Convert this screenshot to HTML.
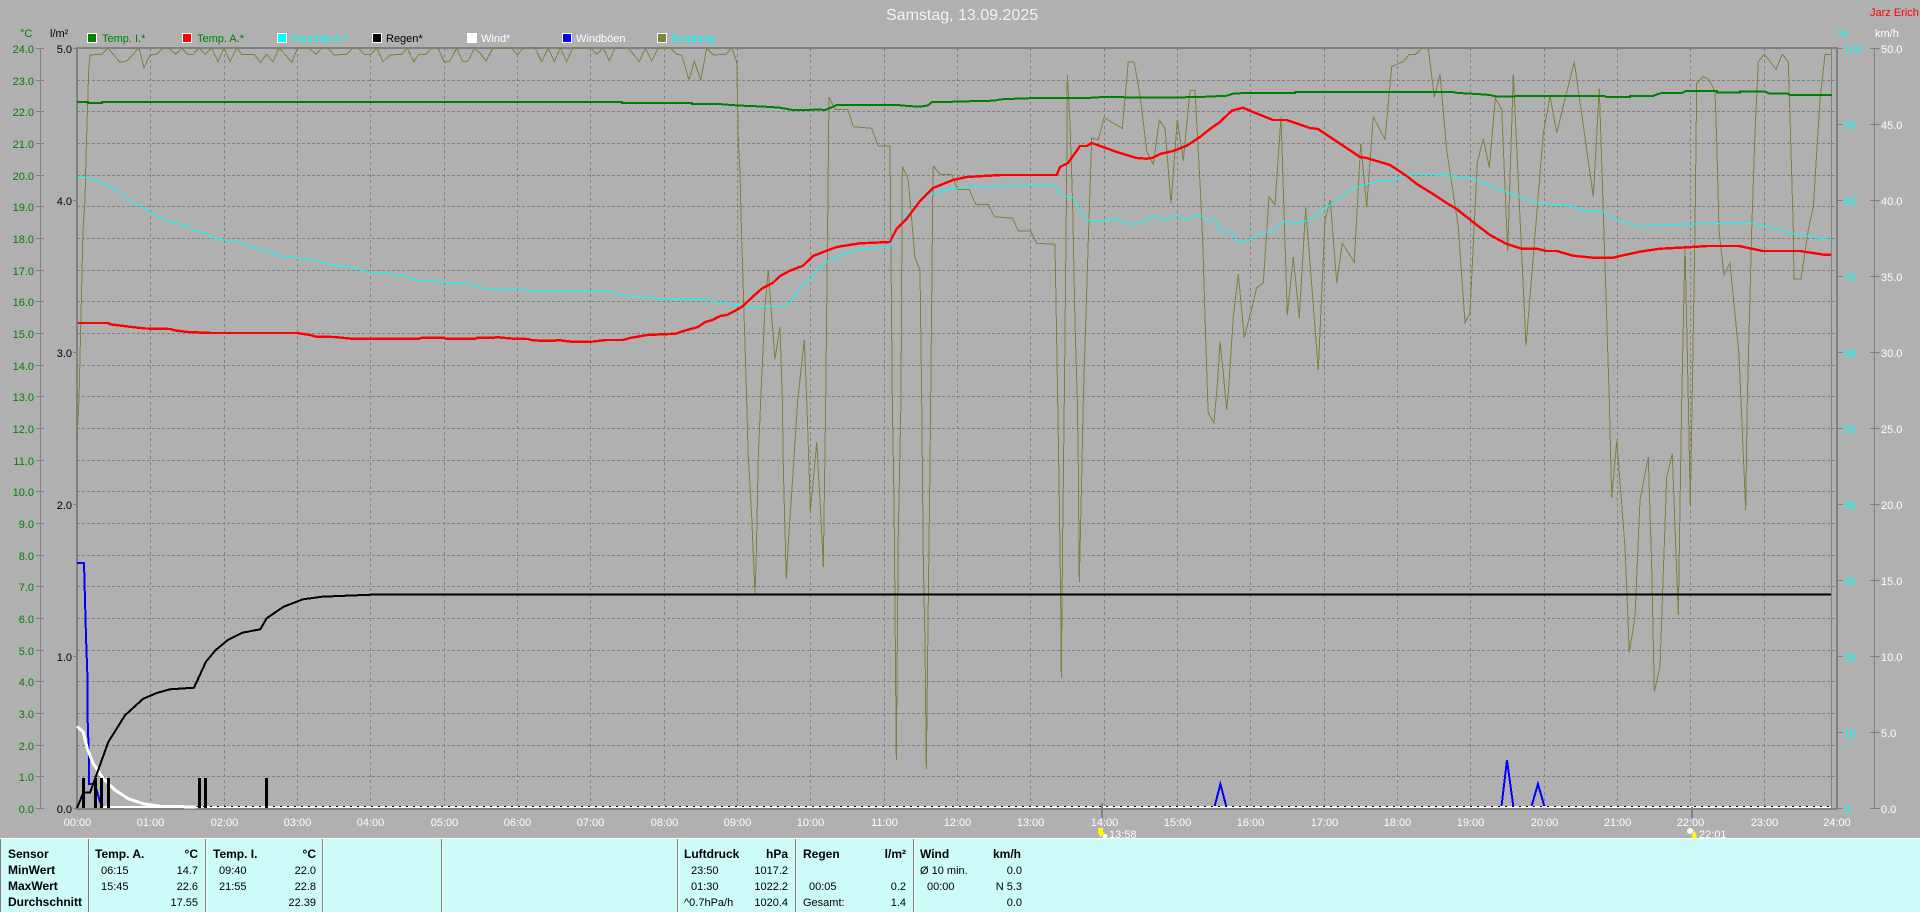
<!DOCTYPE html>
<html lang="de">
<head>
<meta charset="utf-8">
<title>Samstag, 13.09.2025</title>
<style>
html,body{margin:0;padding:0;background:#b0b0b0;width:1920px;height:912px;overflow:hidden}
svg{display:block;position:absolute;left:0;top:0}
text{font-family:"Liberation Sans",sans-serif;font-size:11px;white-space:pre}
.g{fill:#008000}.k{fill:#000}.w{fill:#fff}.c{fill:#0ff}.r{fill:#f00}
.b{font-weight:bold;font-size:12px;fill:#000}
.e{text-anchor:end}.m{text-anchor:middle}
polyline,path.cr,line{shape-rendering:crispEdges;fill:none}
</style>
</head>
<body>
<svg width="1920" height="912" viewBox="0 0 1920 912" xmlns="http://www.w3.org/2000/svg">
<rect width="1920" height="912" fill="#b0b0b0"/>

<!-- title -->
<text x="886" y="20" class="w" style="font-size:16px;opacity:.85">Samstag, 13.09.2025</text>
<text x="1870" y="16" class="r" style="font-size:11px">Jarz Erich</text>

<!-- legend -->
<g stroke="#fff" stroke-width="1">
<rect x="87.5" y="33.5" width="9" height="9" fill="#008000"/>
<rect x="182.5" y="33.5" width="9" height="9" fill="#f00"/>
<rect x="277.5" y="33.5" width="9" height="9" fill="#0ff"/>
<rect x="372.5" y="33.5" width="9" height="9" fill="#000"/>
<rect x="467.5" y="33.5" width="9" height="9" fill="#fff"/>
<rect x="562.5" y="33.5" width="9" height="9" fill="#00f"/>
<rect x="657.5" y="33.5" width="9" height="9" fill="#808040"/>
</g>
<text x="102" y="42" class="g">Temp. I.*</text>
<text x="197" y="42" class="g">Temp. A.*</text>
<text x="291" y="42" class="c">Feuchte A.*</text>
<text x="386" y="42" class="k">Regen*</text>
<text x="481" y="42" class="w">Wind*</text>
<text x="576" y="42" class="w">Windböen</text>
<text x="671" y="42" class="c">Empfang</text>

<!-- axis headers -->
<text x="20" y="37" class="g">°C</text>
<text x="50" y="37" class="k">l/m²</text>
<text x="1838" y="37" class="c">%</text>
<text x="1875" y="37" class="w">km/h</text>

<!-- grid -->
<path class="cr" fill="none" stroke="#808080" stroke-width="1" stroke-dasharray="3 2" d="M77 80.5H1837M77 111.5H1837M77 143.5H1837M77 175.5H1837M77 206.5H1837M77 238.5H1837M77 270.5H1837M77 301.5H1837M77 333.5H1837M77 365.5H1837M77 396.5H1837M77 428.5H1837M77 460.5H1837M77 491.5H1837M77 523.5H1837M77 555.5H1837M77 586.5H1837M77 618.5H1837M77 650.5H1837M77 681.5H1837M77 713.5H1837M77 745.5H1837M77 776.5H1837"/>
<path class="cr" fill="none" stroke="#808080" stroke-width="1" stroke-dasharray="3 3" d="M150.5 48V808M224.5 48V808M297.5 48V808M370.5 48V808M444.5 48V808M517.5 48V808M590.5 48V808M664.5 48V808M737.5 48V808M810.5 48V808M884.5 48V808M957.5 48V808M1030.5 48V808M1104.5 48V808M1177.5 48V808M1250.5 48V808M1324.5 48V808M1397.5 48V808M1470.5 48V808M1544.5 48V808M1617.5 48V808M1690.5 48V808M1764.5 48V808"/>

<!-- frame -->
<rect x="76" y="47" width="1762" height="2" fill="#808080"/>
<rect x="76" y="47" width="2" height="763" fill="#808080"/>
<rect x="1836" y="47" width="2" height="763" fill="#808080"/>
<rect x="1831" y="48" width="1" height="760" fill="#808080"/>
<rect x="76" y="808" width="1762" height="2" fill="#808080"/>

<!-- left axis: temperature -->
<rect x="40" y="48" width="1" height="760" fill="#808080"/>
<path class="cr" fill="none" stroke="#808080" d="M36 48.5H44M36 80.5H44M36 111.5H44M36 143.5H44M36 175.5H44M36 206.5H44M36 238.5H44M36 270.5H44M36 301.5H44M36 333.5H44M36 365.5H44M36 396.5H44M36 428.5H44M36 460.5H44M36 491.5H44M36 523.5H44M36 555.5H44M36 586.5H44M36 618.5H44M36 650.5H44M36 681.5H44M36 713.5H44M36 745.5H44M36 776.5H44M36 808.5H44"/>
<g class="g">
<text x="34" y="53" class="g e">24.0</text><text x="34" y="85" class="g e">23.0</text><text x="34" y="116" class="g e">22.0</text><text x="34" y="148" class="g e">21.0</text><text x="34" y="180" class="g e">20.0</text><text x="34" y="211" class="g e">19.0</text><text x="34" y="243" class="g e">18.0</text><text x="34" y="275" class="g e">17.0</text><text x="34" y="306" class="g e">16.0</text><text x="34" y="338" class="g e">15.0</text><text x="34" y="370" class="g e">14.0</text><text x="34" y="401" class="g e">13.0</text><text x="34" y="433" class="g e">12.0</text><text x="34" y="465" class="g e">11.0</text><text x="34" y="496" class="g e">10.0</text><text x="34" y="528" class="g e">9.0</text><text x="34" y="560" class="g e">8.0</text><text x="34" y="591" class="g e">7.0</text><text x="34" y="623" class="g e">6.0</text><text x="34" y="655" class="g e">5.0</text><text x="34" y="686" class="g e">4.0</text><text x="34" y="718" class="g e">3.0</text><text x="34" y="750" class="g e">2.0</text><text x="34" y="781" class="g e">1.0</text><text x="34" y="813" class="g e">0.0</text>
</g>

<!-- left axis: rain -->
<path class="cr" fill="none" stroke="#808080" d="M73 48.5H77M73 200.5H77M73 352.5H77M73 504.5H77M73 656.5H77M73 808.5H77"/>
<text x="72" y="53" class="k e">5.0</text><text x="72" y="205" class="k e">4.0</text><text x="72" y="357" class="k e">3.0</text><text x="72" y="509" class="k e">2.0</text><text x="72" y="661" class="k e">1.0</text><text x="72" y="813" class="k e">0.0</text>

<!-- right axes -->
<path class="cr" fill="none" stroke="#808080" d="M1838 48.5H1843M1838 124.5H1843M1838 200.5H1843M1838 276.5H1843M1838 352.5H1843M1838 428.5H1843M1838 504.5H1843M1838 580.5H1843M1838 656.5H1843M1838 732.5H1843M1838 808.5H1843"/>
<text x="1844" y="53" class="c">100</text><text x="1844" y="129" class="c">90</text><text x="1844" y="205" class="c">80</text><text x="1844" y="281" class="c">70</text><text x="1844" y="357" class="c">60</text><text x="1844" y="433" class="c">50</text><text x="1844" y="509" class="c">40</text><text x="1844" y="585" class="c">30</text><text x="1844" y="661" class="c">20</text><text x="1844" y="737" class="c">10</text><text x="1844" y="813" class="c">0</text>
<rect x="1874" y="48" width="1" height="760" fill="#808080"/>
<path class="cr" fill="none" stroke="#808080" d="M1870 48.5H1880M1870 124.5H1880M1870 200.5H1880M1870 276.5H1880M1870 352.5H1880M1870 428.5H1880M1870 504.5H1880M1870 580.5H1880M1870 656.5H1880M1870 732.5H1880M1870 808.5H1880"/>
<text x="1881" y="53" class="w">50.0</text><text x="1881" y="129" class="w">45.0</text><text x="1881" y="205" class="w">40.0</text><text x="1881" y="281" class="w">35.0</text><text x="1881" y="357" class="w">30.0</text><text x="1881" y="433" class="w">25.0</text><text x="1881" y="509" class="w">20.0</text><text x="1881" y="585" class="w">15.0</text><text x="1881" y="661" class="w">10.0</text><text x="1881" y="737" class="w">5.0</text><text x="1881" y="813" class="w">0.0</text>

<!-- Empfang -->
<polyline stroke="#808040" stroke-width="1" points="77,440 79,400 83,230 85,200 86,157 88.7,70 90,55 101.7,54.3 108,48 120,62.3 126.7,61 139,48 144,67.7 150,55 156.7,54.3 163,48 169,48 175.7,54.3 181.7,48 187.7,54.3 193,54.3 199,48 205,54.3 211.7,48 218,61.7 224,48 230,61.7 236.7,48 242,54.3 254,54.3 260.7,62.3 266.7,54.3 273,61.7 279,48 285,54.3 291.7,62.3 297.7,48 309,48 315.7,54.3 321.7,48 328,48 334,55 346.7,54.3 352.7,48 358,48 364,54.3 370.7,54.3 376.7,48 383,61.7 390,55 401.7,54.3 407.3,48 413.7,61.7 419,54.3 425.7,54.3 431.7,48 438,48 444.3,62.3 450,61 456.7,48 462.7,61.7 468.3,61 474.3,48 480,53 486,61 492.7,48 511.7,48 517.3,55 523.3,48 535,48 541.7,61.7 548.3,48 554.3,61.7 560.3,48 566.7,61.7 572.7,48 591,48 596.7,54.3 603.3,48 609.3,61 615,48 628.3,48 639.3,61.7 645.3,48 651.7,61 658.3,48 670.7,48 676.7,54.3 681.7,55 689,80 694.3,61 700.7,80 706.7,48 713.3,55 725.7,54.3 731.7,48 736.7,61.7 738.3,140 740,173 741.7,240 746.7,400 748,450 751.7,517 755,593 756,567 758.3,457 760.7,400 765,307 768.3,270 771.7,317 775,359 780,327 782.3,400 783.3,467 785.7,557 786.3,579 788.3,543 791.7,493 797.7,400 804.3,340 806.7,400 809,467 810.3,511 813.3,480 816.7,442 818.3,470 821.7,533 823.3,567 825,450 825.7,400 827.3,257 829,97 835,109.3 847.7,109.3 853.3,126.7 871.7,128.3 878.3,146 890,146 892.3,400 894,500 895,607 896.3,760 898.3,533 901,400 902.3,166 908.3,180 915,258 920,270 921.7,400 923.3,560 925,643 926.3,769 928.3,600 930,467 932.7,200 933.3,166 940,174.3 951.7,174.3 957.3,189.3 969.3,189.3 975.7,204.3 988.3,204.3 994.3,216.7 1012.7,218.3 1018.3,231 1030.7,231 1036.7,243.3 1055,244.3 1057.7,400 1059.3,500 1060.7,600 1061.3,678 1062.7,533 1064.3,400 1066.7,173 1067.3,75 1070,123 1072.7,207 1075,323 1077.3,400 1078.3,467 1079.3,582 1081.7,477 1083.3,400 1088.3,240 1091.7,138 1098.3,140 1104,117.7 1122.3,128.3 1128.3,61.7 1134.3,62.3 1140.7,100 1146.7,151 1153.3,164.3 1159.3,120 1165,128.3 1171,203.3 1177.3,120 1183.3,160.7 1190,90.7 1195,90.7 1200,183 1202.7,240 1205,317 1207.7,400 1208.3,413 1214,422.7 1217.7,380 1220,341.7 1223.3,373 1226.7,410 1228.3,393 1233.3,317 1238.3,274 1244.3,338 1256.7,288 1263.3,282.7 1269,196.7 1275,205 1281,116.7 1287.3,315 1293.3,257 1299.3,318 1305.7,207.7 1318.3,370 1325,220 1330.3,200 1336.7,282.7 1342.3,243.3 1354.3,262.3 1360.7,143.3 1366.7,206.7 1373.3,116.7 1385,139.3 1391.7,66.7 1404,61 1409.3,54.3 1415.7,54.3 1422.3,48 1428.3,48 1434.3,97.3 1440,74.3 1446.7,150 1458.3,226.7 1465,322.7 1470,313 1477.3,161.7 1483.3,139.3 1489.3,167.3 1495.3,98.3 1501.7,109.3 1507.7,251.7 1513.3,74.3 1526,345.7 1543.3,133.3 1550,96 1556.7,132.7 1574.3,61.7 1593.3,196.7 1599.3,88.3 1609.3,400 1611.7,498 1616.7,441.7 1618.3,460 1625,547 1629.3,652.7 1635,616.7 1640,500 1648.3,457.3 1651.7,567 1654.3,691.7 1660,666.7 1666.7,476.7 1672.3,454 1678.3,615 1681.7,400 1685,245 1688.3,400 1690.3,506.7 1695,230 1696.7,83.3 1703.3,76.7 1709.3,80 1715,91.7 1716.7,140 1719,230 1724,275 1730,263 1739,355 1745.7,510 1747.3,400 1751.7,230 1755,133 1758.3,61.7 1764.3,54.3 1776,69.3 1782.3,54.3 1788.3,61.7 1790,116.7 1793.3,230 1794,279 1801,279 1808.3,230 1813.3,206.7 1820,100 1825,54.3 1830.7,54.3"/>

<!-- Feuchte -->
<polyline stroke="#0ff" stroke-width="1" points="77.5,177.5 85,177.5 97,181 120,192 130,200 150,212 165,220 186.6,226 194,231 206,233 213,238 242,243 252,248 266.6,250 278.7,256 310,259.7 339,266 351.4,267 368.4,272 402,275 417,280 441,282 470,284 477.5,287.5 499,290 516,288.7 526,290.5 552.6,291.5 610.7,291.5 618,295 649.5,298 707.7,300 720,302.7 743,306 753,306.7 780,306.7 790,303 803,284 811.7,278 823,264 840,255 860,249 890,247 896.7,229 910,212 923,198 936.7,192 953,188.7 973,186.7 1013,185.7 1055,185.7 1060,195 1073,198 1080,210 1086.7,220 1103,221 1116.7,218 1126.7,224 1140,223.7 1153,216 1165,221 1175,215 1188,219 1200,215 1208,221 1215,219 1220,231 1231.7,233 1238,242 1250,240 1258,234 1271.7,231 1285,221 1296.7,223 1310,219.7 1333,203 1350,190 1366.7,184 1383,180.7 1393,180 1406.7,176 1413,174 1423,174 1466.7,177 1483,183 1500,190 1520,197 1536.7,203 1570,206 1586.7,211 1603,212 1616.7,220 1640,227 1656.7,225 1706.7,223.5 1753,223.5 1773,228 1788,232.6 1831,240"/>

<!-- Temp. I. -->
<polyline stroke="#008000" stroke-width="2" points="77,102 88,102 88,103 102,103 102,102 622,102 622,103 692,103 692,104 719,104 738,105.5 762,106.5 780,107.7 793,110 810,110 817,109.3 825,110 830,108 837,105 897,105 908,106 920,106.7 928,105.3 932,102 957,101.7 977,101 993,100.7 1002,99.3 1015,98.7 1037,98 1087,98 1103,97 1160,97.7 1200,97 1227,95.7 1233,93.7 1245,93 1295,93 1295,92 1452,92 1458,93 1477,94 1490,95 1497,96.7 1513,96.7 1515,96 1605,96 1606,97 1630,97 1630,96 1653,96 1658,94 1662,93 1682,93 1686,91 1717,91 1717,92.7 1740,92.7 1740,91.7 1765,91.7 1770,93.7 1788,93.7 1790,95 1832,95"/>

<!-- Temp. A. -->
<polyline stroke="#f00" stroke-width="2.4" points="77.5,323 107.6,323 111.5,324.5 132,327 145.4,328.5 170,329 175.5,330.5 188,332 211,333 297,333 310,335 316,336.7 334.5,337 351.4,338.7 419,338.7 421.7,337.7 443.5,337.7 446,338.7 475,338.7 477.5,337.7 494.4,337.7 497,337 501.7,337.7 514,338.7 528.4,339 530.8,340 540.5,340.7 555,340.7 557.4,340 572,341.7 591.4,341.7 606,340 623,340 630,338 647,335 676,333.7 683.5,331 698,327 705.3,322 712.5,320 720,316 727,315 736.7,310 743,306 751.7,297.7 761.7,288.7 773,282.7 780,276 790,270.7 803,265.7 813,256 826.7,250.7 836.7,247 860,243.3 890,242 896.7,228.7 906.7,218.7 920,201 933,188 953,180 966.7,177 983,176 1001.7,175 1056.7,175 1060,167 1068,163 1080,146 1086.7,146 1091.7,143 1103,147 1116.7,152 1136.7,158 1146.7,158.7 1153,157.7 1160,154 1173,151 1186.7,145.7 1200,137 1210,129 1220,122 1231.7,110.7 1243,107.7 1253,112 1273,120 1286.7,120 1310,128 1318,129 1333,139 1360,157 1366.7,158 1390,165 1406.7,176 1416.7,184 1433,194 1446.7,203 1456.7,209 1473,222 1490,235 1506.7,244 1521.7,248.7 1536.7,248.7 1546.7,251 1556.7,251 1573,255.7 1593,257.7 1613,257.7 1620,256 1640,251.7 1660,248.7 1680,247.7 1708,246 1739,246 1763,251 1800,251 1824,254.7 1831,254.7"/>

<!-- Windböen -->
<polyline stroke="#00f" stroke-width="2" points="77,563 84,563 85,600 86,637 87.3,673 87.3,710 89,759 89,784 95,784 100,802 103,807 160,807"/>
<polyline stroke="#00f" stroke-width="2" points="1214.5,807 1220.4,784 1226.4,807"/>
<polyline stroke="#00f" stroke-width="2" points="1501.4,807 1507,760 1513.4,807"/>
<polyline stroke="#00f" stroke-width="2" points="1531.3,807 1538,784 1544.6,807"/>

<!-- baseline dotted -->
<rect x="103" y="806" width="1728" height="2" fill="#fff"/>
<path class="cr" fill="none" stroke="#000" stroke-width="1" stroke-dasharray="2 5" d="M196 806.5H1831"/>

<!-- Wind -->
<polyline stroke="#fff" stroke-width="3" points="77,726.3 83.3,732 87.3,748.7 93.3,763.7 103.3,778.7 115,790 128.3,798.7 143,803.7 160,806.3 196.7,807"/>

<!-- Regen -->
<polyline stroke="#000" stroke-width="2" points="77,808 83.3,792.7 90,792.7 108.3,742 125,715.3 143.3,698.7 156.7,693 170,689.3 194,687.7 206,661.7 215.7,650 227.8,640 242.4,632.7 260.3,629.3 266.6,618.3 283.6,606.7 303,599.3 322.3,596.7 370.8,594.7 1831,594.7"/>
<g fill="#000">
<rect x="82" y="778" width="3" height="30"/><rect x="94" y="778" width="3" height="30"/><rect x="100" y="778" width="3" height="30"/><rect x="107" y="778" width="3" height="30"/><rect x="198" y="778" width="3" height="30"/><rect x="204" y="778" width="3" height="30"/><rect x="265" y="778" width="3" height="30"/>
</g>

<!-- time labels -->
<text x="77.5" y="826" class="w m">00:00</text><text x="150.5" y="826" class="w m">01:00</text><text x="224.5" y="826" class="w m">02:00</text><text x="297.5" y="826" class="w m">03:00</text><text x="370.5" y="826" class="w m">04:00</text><text x="444.5" y="826" class="w m">05:00</text><text x="517.5" y="826" class="w m">06:00</text><text x="590.5" y="826" class="w m">07:00</text><text x="664.5" y="826" class="w m">08:00</text><text x="737.5" y="826" class="w m">09:00</text><text x="810.5" y="826" class="w m">10:00</text><text x="884.5" y="826" class="w m">11:00</text><text x="957.5" y="826" class="w m">12:00</text><text x="1030.5" y="826" class="w m">13:00</text><text x="1104.5" y="826" class="w m">14:00</text><text x="1177.5" y="826" class="w m">15:00</text><text x="1250.5" y="826" class="w m">16:00</text><text x="1324.5" y="826" class="w m">17:00</text><text x="1397.5" y="826" class="w m">18:00</text><text x="1470.5" y="826" class="w m">19:00</text><text x="1544.5" y="826" class="w m">20:00</text><text x="1617.5" y="826" class="w m">21:00</text><text x="1690.5" y="826" class="w m">22:00</text><text x="1764.5" y="826" class="w m">23:00</text><text x="1837" y="826" class="w m">24:00</text>

<!-- sunrise / sunset markers -->
<rect x="1101" y="803" width="2" height="15" fill="#808080"/>
<rect x="1691" y="807" width="2" height="11" fill="#808080"/>
<polygon points="1098,828 1103,828 1103,832 1105,832 1100.5,837 1098,832" fill="#ff0"/>
<circle cx="1105" cy="836.5" r="2.5" fill="#fff"/>
<text x="1109" y="838" class="w">13:58</text>
<circle cx="1690" cy="831" r="3" fill="#fff"/>
<polygon points="1694,830 1697,836 1696,838 1692,838 1692,835" fill="#ff0"/>
<text x="1699" y="838" class="w">22:01</text>

<!-- table -->
<rect x="0" y="838" width="1920" height="74" fill="#ccfbf8"/>
<rect x="0" y="838" width="1920" height="1" fill="#fff"/>
<rect x="0" y="839" width="1" height="73" fill="#808080"/>
<g fill="#808080">
<rect x="88" y="839" width="1" height="73"/><rect x="205" y="839" width="1" height="73"/><rect x="322" y="839" width="1" height="73"/><rect x="441" y="839" width="1" height="73"/><rect x="677" y="839" width="1" height="73"/><rect x="795" y="839" width="1" height="73"/><rect x="913" y="839" width="1" height="73"/>
</g>
<g fill="#fff">
<rect x="89" y="839" width="1" height="73"/><rect x="206" y="839" width="1" height="73"/><rect x="323" y="839" width="1" height="73"/><rect x="442" y="839" width="1" height="73"/><rect x="678" y="839" width="1" height="73"/><rect x="796" y="839" width="1" height="73"/><rect x="914" y="839" width="1" height="73"/>
</g>

<text x="8" y="858" class="b">Sensor</text>
<text x="8" y="874" class="b">MinWert</text>
<text x="8" y="890" class="b">MaxWert</text>
<text x="8" y="906" class="b">Durchschnitt</text>

<text x="95" y="858" class="b">Temp. A.</text><text x="198" y="858" class="b e">°C</text>
<text x="101" y="874" class="k">06:15</text><text x="198" y="874" class="k e">14.7</text>
<text x="101" y="890" class="k">15:45</text><text x="198" y="890" class="k e">22.6</text>
<text x="198" y="906" class="k e">17.55</text>

<text x="213" y="858" class="b">Temp. I.</text><text x="316" y="858" class="b e">°C</text>
<text x="219" y="874" class="k">09:40</text><text x="316" y="874" class="k e">22.0</text>
<text x="219" y="890" class="k">21:55</text><text x="316" y="890" class="k e">22.8</text>
<text x="316" y="906" class="k e">22.39</text>

<text x="684" y="858" class="b">Luftdruck</text><text x="788" y="858" class="b e">hPa</text>
<text x="691" y="874" class="k">23:50</text><text x="788" y="874" class="k e">1017.2</text>
<text x="691" y="890" class="k">01:30</text><text x="788" y="890" class="k e">1022.2</text>
<text x="684" y="906" class="k">^0.7hPa/h</text><text x="788" y="906" class="k e">1020.4</text>

<text x="803" y="858" class="b">Regen</text><text x="906" y="858" class="b e">l/m²</text>
<text x="809" y="890" class="k">00:05</text><text x="906" y="890" class="k e">0.2</text>
<text x="803" y="906" class="k">Gesamt:</text><text x="906" y="906" class="k e">1.4</text>

<text x="920" y="858" class="b">Wind</text><text x="1021" y="858" class="b e">km/h</text>
<text x="920" y="874" class="k">Ø 10 min.</text><text x="1022" y="874" class="k e">0.0</text>
<text x="927" y="890" class="k">00:00</text><text x="1022" y="890" class="k e">N 5.3</text>
<text x="1022" y="906" class="k e">0.0</text>
</svg>
</body>
</html>
